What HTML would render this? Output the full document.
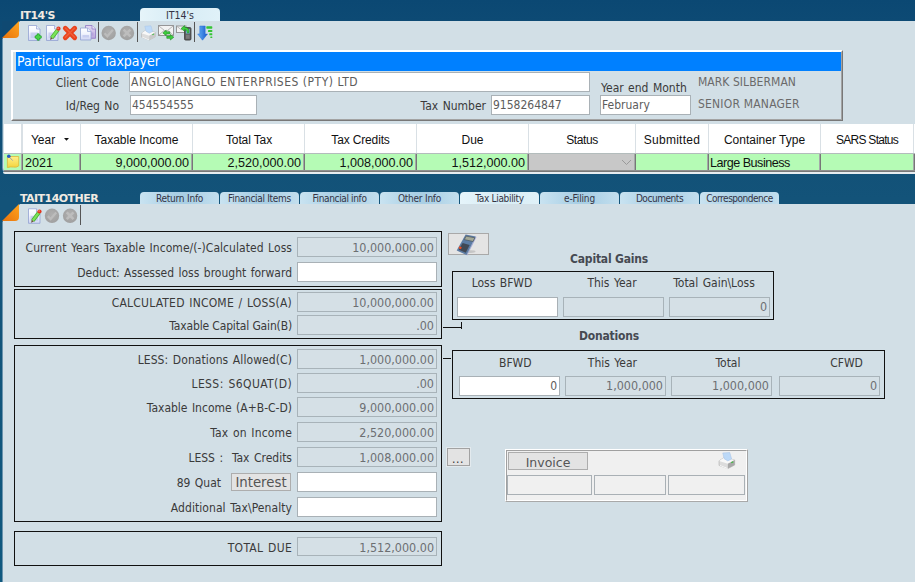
<!DOCTYPE html>
<html><head><meta charset="utf-8"><title>IT14's</title>
<style>
html,body{margin:0;padding:0;}
body{width:915px;height:582px;overflow:hidden;position:relative;background:linear-gradient(#0b4873 0px,#0d4a74 20px,#135379 200px,#10597f 582px);font-family:"DejaVu Sans Condensed","DejaVu Sans","Liberation Sans",sans-serif;font-size:12px;color:#333;}
.a{position:absolute;box-sizing:border-box;white-space:nowrap;}
.panel{background:#d2dfe6;box-shadow:-1px 0 0 #6a93ad;}
.title{color:#f1ebe2;font-weight:bold;font-size:11px;font-family:"DejaVu Sans","Liberation Sans",sans-serif;letter-spacing:-0.55px;}
.tab{height:13px;border-radius:4px 4px 0 0;background:linear-gradient(90deg,#c9e3f1,#a9cfe5 45%,#a9cfe5 60%,#c3dfee);font-size:10px;color:#334;text-align:center;line-height:14px;letter-spacing:-0.45px;}
.tab.act{background:linear-gradient(90deg,#e6f4fa,#d6ecf5 50%,#e0f1f8);}
.lbl{text-align:right;color:#3a3a3a;font-size:12px;line-height:14px;word-spacing:1px;margin-top:1px;}
.inp{background:#fff;border:1px solid #a9b1b6;color:#5c5c5c;font-size:12px;line-height:18px;padding:0 2px 0 1px;}
.ro{background:#d5e0e6;border:1px solid #a8b3b9;color:#6c6f72;font-size:12.45px;line-height:18px;text-align:right;padding:0 2px;}
.box{border:1px solid #111;}
.fl{text-align:right;color:#3a3a3a;font-size:12px;line-height:20px;height:20px;word-spacing:1px;margin-top:1px;}
.f20{line-height:20px;}
.rl{text-align:center;color:#3a3a3a;font-size:12px;line-height:14px;word-spacing:1px;}
.gh{background:#fff;font-family:"Liberation Sans",sans-serif;font-size:12px;color:#111;text-align:center;line-height:32px;top:124px;height:29px;}
.gc{background:#b5fbb5;font-family:"Liberation Sans",sans-serif;font-size:12.6px;color:#111;line-height:18px;top:154px;height:16px;padding:0 2px 0 2px;overflow:hidden;}
.r{text-align:right;}
.hd{font-weight:bold;letter-spacing:-.2px;color:#464a52;font-size:12px;text-align:center;margin-top:1px;}
.btn{background:#e3e3e3;border:1px solid #bdbdbd;color:#444;text-align:center;}
</style></head><body>

<!-- ===== top window ===== -->
<div class="a title" style="left:20px;top:9px;">IT14'S</div>
<div class="a tab act" style="left:140px;top:8px;width:80px;font-size:10.5px;letter-spacing:0;line-height:15px;">IT14's</div>
<div class="a panel" style="left:3px;top:21px;width:912px;height:153px;border-radius:0 0 0 6px;"></div>
<svg class="a" style="left:2px;top:21px;" width="18" height="18"><defs><linearGradient id="og" x1="0" y1="1" x2="1" y2="0"><stop offset="0" stop-color="#e8720c"/><stop offset="1" stop-color="#ffa51e"/></linearGradient></defs><path d="M0 0H18L0 18Z" fill="#0f4972"/><path d="M0 17 L17 0 L17 13 Q17 17 13 17 Z" fill="url(#og)"/></svg>

<!-- group frame -->
<div class="a" style="left:11px;top:50px;width:832px;height:71px;border:1px solid;border-color:#fff #787878 #787878 #fff;"></div>
<div class="a" style="left:12px;top:51px;width:830px;height:69px;border:1px solid;border-color:#fff #a3a3a3 #a3a3a3 #fff;"></div>
<div class="a" style="left:16px;top:52px;width:825px;height:19px;background:#0080ff;color:#fff;font-size:14px;line-height:19px;padding-left:1px;">Particulars of Taxpayer</div>
<div class="a lbl" style="left:30px;top:75px;width:89px;">Client Code</div>
<div class="a inp" style="left:129px;top:72px;width:461px;height:20px;letter-spacing:.5px;padding-left:1px;">ANGLO|ANGLO ENTERPRISES (PTY) LTD</div>
<div class="a lbl" style="left:30px;top:98px;width:89px;">Id/Reg No</div>
<div class="a inp" style="left:130px;top:95px;width:127px;height:20px;">454554555</div>
<div class="a lbl" style="left:400px;top:98px;width:86px;">Tax Number</div>
<div class="a inp" style="left:491px;top:95px;width:99px;height:20px;">9158264847</div>
<div class="a lbl" style="left:601px;top:80px;text-align:left;">Year end Month</div>
<div class="a inp" style="left:600px;top:95px;width:91px;height:20px;">February</div>
<div class="a" style="left:698px;top:75px;font-size:12px;color:#6a6a6a;letter-spacing:.05px;">MARK SILBERMAN</div>
<div class="a" style="left:698px;top:97px;font-size:12px;color:#6a6a6a;letter-spacing:.2px;">SENIOR MANAGER</div>

<!-- grid -->
<div class="a" style="left:4px;top:124px;width:911px;height:29px;background:#d9e0e5;"></div>
<div class="a" style="left:4px;top:153px;width:911px;height:19px;background:linear-gradient(#b3bcbc 0,#b3bcbc 1px,#777 1px);"></div>
<div class="a" style="left:3px;top:172px;width:912px;height:2px;background:#e6ecf0;border-radius:0 0 0 5px;"></div>
<div class="a gh" style="left:4px;width:17px;"></div>
<div class="a gh" style="left:23px;width:57px;padding-right:17px;">Year</div>
<div class="a gh" style="left:81px;width:111px;">Taxable Income</div>
<div class="a gh" style="left:193px;width:111px;letter-spacing:-.12px;padding-left:1px;">Total Tax</div>
<div class="a gh" style="left:305px;width:111px;letter-spacing:-.15px;">Tax Credits</div>
<div class="a gh" style="left:417px;width:111px;">Due</div>
<div class="a gh" style="left:529px;width:106px;letter-spacing:-.4px;">Status</div>
<div class="a gh" style="left:636px;width:72px;letter-spacing:.25px;">Submitted</div>
<div class="a gh" style="left:709px;width:111px;">Container Type</div>
<div class="a gh" style="left:821px;width:92px;letter-spacing:-.75px;">SARS Status</div><div class="a gh" style="left:914px;width:1px;"></div>
<div class="a gc" style="left:4px;width:17px;"></div>
<div class="a" style="left:21px;top:154px;width:1px;height:16px;background:#a4a8a8;"></div>
<div class="a gc" style="left:23px;width:56px;">2021</div>
<div class="a" style="left:79px;top:154px;width:1px;height:16px;background:#a4a8a8;"></div>
<div class="a gc r" style="left:81px;width:110px;">9,000,000.00</div>
<div class="a" style="left:191px;top:154px;width:1px;height:16px;background:#a4a8a8;"></div>
<div class="a gc r" style="left:193px;width:110px;">2,520,000.00</div>
<div class="a" style="left:303px;top:154px;width:1px;height:16px;background:#a4a8a8;"></div>
<div class="a gc r" style="left:305px;width:110px;">1,008,000.00</div>
<div class="a" style="left:415px;top:154px;width:1px;height:16px;background:#a4a8a8;"></div>
<div class="a gc r" style="left:417px;width:110px;">1,512,000.00</div>
<div class="a" style="left:527px;top:154px;width:1px;height:16px;background:#a4a8a8;"></div>
<div class="a gc" style="left:529px;width:105px;background:#c8c8c8;"></div>
<div class="a" style="left:634px;top:154px;width:1px;height:16px;background:#a4a8a8;"></div>
<div class="a gc" style="left:636px;width:71px;"></div>
<div class="a" style="left:707px;top:154px;width:1px;height:16px;background:#a4a8a8;"></div>
<div class="a gc" style="left:709px;width:110px;letter-spacing:-.5px;padding-left:1px;">Large Business</div>
<div class="a" style="left:819px;top:154px;width:1px;height:16px;background:#a4a8a8;"></div>
<div class="a gc" style="left:821px;width:92px;"></div><div class="a" style="left:913px;top:154px;width:1px;height:16px;background:#a4a8a8;"></div>
<div class="a" style="left:4px;top:170px;width:911px;height:1px;background:#909090;"></div>
<svg class="a" style="left:64px;top:138px;" width="6" height="4"><path d="M0 0h5l-2.5 2.8z" fill="#111"/></svg>
<svg class="a" style="left:621px;top:159px;" width="11" height="7"><path d="M1 1l4.5 4.5L10 1" stroke="#9a9a9a" fill="none" stroke-width="1"/></svg>
<!-- note icon -->
<svg class="a" style="left:5px;top:153px;" width="16" height="18"><defs><linearGradient id="ng" x1="0" y1="0" x2="0" y2="1"><stop offset="0" stop-color="#fff08a"/><stop offset="1" stop-color="#f3d33c"/></linearGradient></defs><path d="M2.4 3.5h11.3v9.4q-2 1.7-5.2 1.2q-3.2-.6-6.1.5z" fill="url(#ng)" stroke="#dcb73a" stroke-width=".8"/><path d="M4.5 4.2l3.2 3.4" stroke="#9aa0a8" stroke-width="1"/><circle cx="3.8" cy="3.2" r="1.8" fill="#2458c8"/></svg>

<!-- ===== bottom window ===== -->
<div class="a title" style="left:20px;top:192px;">TAIT14OTHER</div>
<div class="a tab" style="left:140px;top:192px;width:79px;letter-spacing:-0.22px;">Return Info</div>
<div class="a tab" style="left:220px;top:192px;width:79px;letter-spacing:-0.3px;">Financial Items</div>
<div class="a tab" style="left:300px;top:192px;width:79px;letter-spacing:-0.35px;">Financial info</div>
<div class="a tab" style="left:380px;top:192px;width:79px;letter-spacing:-0.22px;">Other Info</div>
<div class="a tab act" style="left:460px;top:192px;width:79px;letter-spacing:-0.32px;">Tax Liability</div>
<div class="a tab" style="left:540px;top:192px;width:79px;letter-spacing:-0.15px;">e-Filing</div>
<div class="a tab" style="left:620px;top:192px;width:79px;letter-spacing:-0.45px;">Documents</div>
<div class="a tab" style="left:700px;top:192px;width:79px;letter-spacing:-0.5px;">Correspondence</div>
<div class="a panel" style="left:3px;top:204px;width:912px;height:378px;"></div>
<svg class="a" style="left:2px;top:204px;" width="18" height="18"><path d="M0 0H18L0 18Z" fill="#135379"/><path d="M0 17 L17 0 L17 13 Q17 17 13 17 Z" fill="url(#og)"/></svg>

<!-- group 1 -->
<div class="a box" style="left:14px;top:231px;width:428px;height:56px;"></div>
<div class="a box" style="left:14px;top:289px;width:428px;height:50px;"></div>
<div class="a box" style="left:14px;top:345px;width:428px;height:177px;"></div>
<div class="a box" style="left:14px;top:531px;width:428px;height:35px;"></div>
<div class="a fl" style="left:14px;top:237px;width:278px;letter-spacing:.055px;">Current Years Taxable Income/(-)Calculated Loss</div>
<div class="a ro f20" style="left:297px;top:237px;width:140px;height:20px;">10,000,000.00</div>
<div class="a fl" style="left:14px;top:262px;width:278px;">Deduct: Assessed loss brought forward</div>
<div class="a inp f20" style="left:297px;top:262px;width:140px;height:20px;"></div>
<div class="a fl" style="left:14px;top:292px;width:278px;letter-spacing:.2px;">CALCULATED INCOME / LOSS(A)</div>
<div class="a ro f20" style="left:297px;top:292px;width:140px;height:20px;">10,000,000.00</div>
<div class="a fl" style="left:14px;top:315px;width:278px;letter-spacing:-.15px;word-spacing:0;">Taxable Capital Gain(B)</div>
<div class="a ro f20" style="left:297px;top:315px;width:140px;height:20px;">.00</div>
<div class="a fl" style="left:14px;top:349px;width:278px;letter-spacing:.09px;">LESS: Donations Allowed(C)</div>
<div class="a ro f20" style="left:297px;top:349px;width:140px;height:20px;">1,000,000.00</div>
<div class="a fl" style="left:14px;top:373px;width:278px;letter-spacing:.4px;">LESS: S6QUAT(D)</div>
<div class="a ro f20" style="left:297px;top:373px;width:140px;height:20px;">.00</div>
<div class="a fl" style="left:14px;top:397px;width:278px;">Taxable Income (A+B-C-D)</div>
<div class="a ro f20" style="left:297px;top:397px;width:140px;height:20px;">9,000,000.00</div>
<div class="a fl" style="left:14px;top:422px;width:278px;letter-spacing:.16px;">Tax on Income</div>
<div class="a ro f20" style="left:297px;top:422px;width:140px;height:20px;">2,520,000.00</div>
<div class="a fl" style="left:14px;top:447px;width:278px;">LESS :&nbsp; Tax Credits</div>
<div class="a ro f20" style="left:297px;top:447px;width:140px;height:20px;">1,008,000.00</div>
<div class="a fl" style="left:14px;top:472px;width:207px;">89 Quat</div>
<div class="a inp f20" style="left:297px;top:472px;width:140px;height:20px;"></div>
<div class="a fl" style="left:14px;top:497px;width:278px;letter-spacing:.07px;">Additional Tax\Penalty</div>
<div class="a inp f20" style="left:297px;top:497px;width:140px;height:20px;"></div>
<div class="a fl" style="left:14px;top:537px;width:278px;letter-spacing:.3px;">TOTAL DUE</div>
<div class="a ro f20" style="left:297px;top:537px;width:140px;height:19px;">1,512,000.00</div>
<div class="a btn" style="left:231px;top:473px;width:60px;height:18px;font-size:13.3px;line-height:18px;color:#555;border-color:#adadad;font-family:'DejaVu Sans',sans-serif;overflow:hidden;">Interest</div>

<!-- right side -->
<div class="a btn" style="left:448px;top:233px;width:41px;height:22px;border-color:#a9a9a9;background:#e4e4e4;"></div>
<div class="a hd" style="left:539px;top:251px;width:140px;">Capital Gains</div>
<div class="a box" style="left:452px;top:271px;width:322px;height:49px;"></div>
<div class="a rl" style="left:442px;top:276px;width:120px;">Loss BFWD</div>
<div class="a rl" style="left:552px;top:276px;width:120px;">This Year</div>
<div class="a rl" style="left:654px;top:276px;width:120px;">Total Gain\Loss</div>
<div class="a inp" style="left:457px;top:297px;width:101px;height:20px;"></div>
<div class="a ro" style="left:563px;top:297px;width:101px;height:20px;"></div>
<div class="a ro" style="left:669px;top:297px;width:101px;height:20px;">0</div>
<div class="a" style="left:443px;top:327px;width:19px;height:1px;background:#111;"></div>
<div class="a" style="left:461px;top:322px;width:1px;height:7px;background:#111;"></div>
<div class="a hd" style="left:539px;top:328px;width:140px;">Donations</div>
<div class="a" style="left:443px;top:358px;width:8px;height:1px;background:#111;"></div>
<div class="a box" style="left:452px;top:350px;width:433px;height:49px;"></div>
<div class="a rl" style="left:455.29999999999995px;top:356px;width:120px;">BFWD</div>
<div class="a rl" style="left:552.4px;top:356px;width:120px;">This Year</div>
<div class="a rl" style="left:668px;top:356px;width:120px;">Total</div>
<div class="a rl" style="left:786.5px;top:356px;width:120px;">CFWD</div>
<div class="a inp r" style="left:459px;top:376px;width:101px;height:20px;">0</div>
<div class="a ro" style="left:565px;top:376px;width:101px;height:20px;">1,000,000</div>
<div class="a ro" style="left:671px;top:376px;width:101px;height:20px;">1,000,000</div>
<div class="a ro" style="left:779px;top:376px;width:101px;height:20px;">0</div>

<div class="a btn" style="left:447px;top:448px;width:23px;height:18px;line-height:13px;border-color:#a2a2a2;box-shadow:0 0 0 1px #e3eaee;font-size:0;"><span style="font-size:12px;letter-spacing:.55px;position:absolute;left:4px;top:3.5px;color:#333;">...</span></div>
<div class="a" style="left:505px;top:449px;width:243px;height:53px;background:#f0f0f0;border:1px solid;border-color:#fff #a4a4a4 #a9a9a9 #fff;"></div><div class="a" style="left:506px;top:450px;width:241px;height:51px;border:1px solid;border-color:#a0a0a0 #fff #fff #a0a0a0;"></div>
<div class="a btn" style="left:508px;top:452px;width:80px;height:18px;font-size:12.5px;line-height:19px;color:#555;overflow:hidden;border-color:#adadad;font-family:'DejaVu Sans',sans-serif;">Invoice</div>
<div class="a" style="left:507px;top:475px;width:85px;height:20px;background:#f0f0f0;border:1px solid #a9b0b5;"></div>
<div class="a" style="left:594px;top:475px;width:72px;height:20px;background:#f0f0f0;border:1px solid #a9b0b5;"></div>
<div class="a" style="left:668px;top:475px;width:77px;height:20px;background:#f0f0f0;border:1px solid #a9b0b5;"></div>


<!-- icons -->
<svg class="a" style="left:0;top:0;" width="915" height="582" viewBox="0 0 915 582">
<defs>
<linearGradient id="pg" x1="0" y1="0" x2="0" y2="1"><stop offset="0" stop-color="#ffffff"/><stop offset=".45" stop-color="#f3f5fd"/><stop offset="1" stop-color="#cfd5f3"/></linearGradient>
<linearGradient id="pp" x1="0" y1="0" x2="0" y2="1"><stop offset="0" stop-color="#e4daf3"/><stop offset="1" stop-color="#b9a6dc"/></linearGradient>
<radialGradient id="cg" cx=".5" cy=".4" r=".6"><stop offset="0" stop-color="#b0b0b0"/><stop offset="1" stop-color="#a0a0a0"/></radialGradient>
<linearGradient id="rx" x1="0" y1="0" x2="0" y2="1"><stop offset="0" stop-color="#f4572c"/><stop offset="1" stop-color="#d93613"/></linearGradient>
<linearGradient id="ba" x1="0" y1="0" x2="1" y2="0"><stop offset="0" stop-color="#63b3f7"/><stop offset="1" stop-color="#1a57cc"/></linearGradient>
</defs>
<path d="M28.5 25.5h8.0l3.5 3.5v11.5h-11.5z" fill="url(#pg)" stroke="#93a2d2" stroke-width=".8"/><path d="M36.5 25.5v3.5h3.5" fill="#e8eefc" stroke="#93a2d2" stroke-width=".7"/><rect x="30.5" y="32.5" width="7.5" height="5.5" fill="#bfc6ec" opacity=".75"/>
<path d="M36.2 37h4M38.2 35v4" stroke="#25a52e" stroke-width="3.3" stroke-linecap="round"/><path d="M36.4 37h3.6M38.2 35.2v3.6" stroke="#4ad24a" stroke-width="2" stroke-linecap="round"/>
<path d="M46.5 25.5h8.0l3.5 3.5v11.5h-11.5z" fill="url(#pg)" stroke="#93a2d2" stroke-width=".8"/><path d="M54.5 25.5v3.5h3.5" fill="#e8eefc" stroke="#93a2d2" stroke-width=".7"/><rect x="48.5" y="32.5" width="7.5" height="5.5" fill="#bfc6ec" opacity=".75"/>
<path d="M51.8 37.8L57.8 29.8" stroke="#48ad31" stroke-width="3.9" stroke-linecap="butt"/><path d="M51.8 37.8L57.8 29.8" stroke="#7ce35a" stroke-width="2.3"/><path d="M50.1 39.9l.6-2.9 2.2 1.6z" fill="#6b5a3a"/><circle cx="58.5" cy="28.7" r="2.1" fill="#e2371f"/><circle cx="58.1" cy="28.2" r=".7" fill="#f59a84"/>
<path d="M65.3 28.3l9.4 9.4M74.7 28.3l-9.4 9.4" stroke="#e9431d" stroke-width="4.8" stroke-linecap="round"/><path d="M65.6 28.2l9 9M74.4 28.2l-9 9" stroke="#f46a45" stroke-width="1.6" stroke-linecap="round" opacity=".7"/>
<path d="M85.5 25.5h6.5l3.5 3.5v9.3h-10z" fill="url(#pp)" stroke="#9682c6" stroke-width=".9"/><path d="M92.0 25.5v3.5h3.5" fill="#efe8fa" stroke="#9682c6" stroke-width=".8"/><rect x="87.5" y="32.5" width="6" height="3.3000000000000007" fill="#b09cd8" opacity=".75"/>
<path d="M80.5 28h7.0l3.5 3.5v8.5h-10.5z" fill="url(#pg)" stroke="#93a2d2" stroke-width=".8"/><path d="M87.5 28v3.5h3.5" fill="#e8eefc" stroke="#93a2d2" stroke-width=".7"/><rect x="82.5" y="35" width="6.5" height="2.5" fill="#bfc6ec" opacity=".75"/>
<rect x="98" y="22" width="1" height="20" fill="#555"/><rect x="137" y="22" width="1" height="20" fill="#555"/><rect x="194" y="22" width="1" height="20" fill="#555"/>
<circle cx="108.7" cy="33" r="7.2" fill="url(#cg)"/><path d="M104.5 33.3l2.8 2.9 5.6-6.4" fill="none" stroke="#bcbcbc" stroke-width="2.3"/>
<circle cx="127" cy="33" r="7.2" fill="url(#cg)"/><path d="M123.6 29.6l6.8 6.8M130.4 29.6l-6.8 6.8" fill="none" stroke="#bdbdbd" stroke-width="2.6"/>
<g transform="translate(141 25.6) scale(1)"><path d="M.5 7.6L5 4.6l9.3 2.2v4.4l-6 3.2L.5 11.6z" fill="#dcdcdc" stroke="#b4b4b4" stroke-width=".6"/><path d="M.5 7.6L5 4.6l9.3 2.2-6 3.4z" fill="#f8f8f8"/><path d="M5 5.6L3.8.6l6.2-.4 1.6 5.8-3.4 1.6z" fill="#bcd9f8" stroke="#a9c4e6" stroke-width=".5"/><path d="M1.2 11.2l6.9 2.6 0 .9L1.2 12z" fill="#fff"/><path d="M8.3 10.2l6-3.4v4.4l-6 3.2z" fill="#c9c9c9"/><rect x="11.2" y="8.3" width="2" height="1" fill="#3dbb3d" transform="rotate(-28 12.2 8.8)"/></g>
<rect x="158.5" y="25.5" width="15" height="10" fill="#f3f3f3" stroke="#8e8e8e" stroke-width=".9"/><path d="M158.5 25.7l7.5 6 7.5-6M158.7 35.3l5.4-4.8M173.3 35.3l-5.4-4.8" fill="none" stroke="#a8a8a8" stroke-width=".8"/>
<path d="M162.8 32.9l3.4-2.8v1.7h3.6v2.2h-3.6v1.7z" fill="#3ecf3e" stroke="#1c8a22" stroke-width=".6"/><path d="M173.8 37.2l-3.4-2.8v1.7h-3.6v2.2h3.6v1.7z" fill="#3ecf3e" stroke="#1c8a22" stroke-width=".6"/>
<rect x="176.5" y="26" width="9.5" height="6.5" fill="#f3f3f3" stroke="#8e8e8e" stroke-width=".9"/><path d="M176.7 26.2l4.6 3.6 4.6-3.6" fill="none" stroke="#a8a8a8" stroke-width=".8"/>
<rect x="184.5" y="27.5" width="6.5" height="12.6" rx="1.2" fill="#5b5b5b" stroke="#3f3f3f" stroke-width=".8"/><rect x="185.9" y="29.2" width="3.8" height="4.3" fill="#82c4ee"/><rect x="185.9" y="34.6" width="3.8" height="4.2" fill="#7c7c7c"/>
<path d="M181 28.6l3.6-3v1.6q5 .2 4.4 5.6h-1.9q.3-3.3-2.5-3.3v1.8z" fill="#3ecf3e" stroke="#1c8a22" stroke-width=".6"/>
<path d="M199.8 26h5.4v8h2.3l-5 6.2-4.8-6.2h2.1z" fill="url(#ba)" stroke="#2a6fd8" stroke-width=".5"/>
<rect x="206.3" y="26.3" width="6" height="2.4" rx=".6" fill="#35c535"/><rect x="208" y="29.9" width="4.3" height="2.2" rx=".6" fill="#35c535"/><rect x="209.3" y="33.3" width="3" height="1.9" rx=".5" fill="#35c535"/><rect x="210.3" y="36.4" width="2" height="1.7" rx=".5" fill="#35c535"/>
<path d="M28.5 208.8h8.0l3.5 3.5v11.0h-11.5z" fill="url(#pg)" stroke="#93a2d2" stroke-width=".8"/><path d="M36.5 208.8v3.5h3.5" fill="#e8eefc" stroke="#93a2d2" stroke-width=".7"/><rect x="30.5" y="215.8" width="7.5" height="5.0" fill="#bfc6ec" opacity=".75"/>
<path d="M32.8 220.60000000000002L38.8 212.60000000000002" stroke="#48ad31" stroke-width="3.9" stroke-linecap="butt"/><path d="M32.8 220.60000000000002L38.8 212.60000000000002" stroke="#7ce35a" stroke-width="2.3"/><path d="M31.1 222.70000000000002l.6-2.9 2.2 1.6z" fill="#6b5a3a"/><circle cx="39.5" cy="211.5" r="2.1" fill="#e2371f"/><circle cx="39.1" cy="211.0" r=".7" fill="#f59a84"/>
<circle cx="52" cy="215.8" r="7.2" fill="url(#cg)"/><path d="M47.8 216.10000000000002l2.8 2.9 5.6-6.4" fill="none" stroke="#bcbcbc" stroke-width="2.3"/>
<circle cx="70.1" cy="215.8" r="7.2" fill="url(#cg)"/><path d="M66.69999999999999 212.4l6.8 6.8M73.5 212.4l-6.8 6.8" fill="none" stroke="#bdbdbd" stroke-width="2.6"/>
<rect x="80" y="205" width="1" height="20" fill="#555"/>
<ellipse cx="470.5" cy="251.6" rx="5" ry="1.4" fill="#b8b8b8" opacity=".7"/><path d="M475.7 236.5l.8.6-9.3 18.5-.7-.5z" fill="#a3a8d6"/><path d="M465.6 234.6l10.1 1.9-9.2 18.6-9.8-4.5z" fill="#5c7ca4"/><path d="M466.1 236.1l8.7 1.7-1.7 3.7-8.8-1.9z" fill="#a4a997" stroke="#4c5660" stroke-width=".7"/><path d="M462.6 243l7 2-3.8 7.7-7-3z" fill="#3d424c" opacity=".9"/><path d="M459.4 246.2l2.4 1-.9 2.1-2.4-1z" fill="#ee4a1e"/>
<g transform="translate(718.5 452.3) scale(1.13)"><path d="M.5 7.6L5 4.6l9.3 2.2v4.4l-6 3.2L.5 11.6z" fill="#dcdcdc" stroke="#b4b4b4" stroke-width=".6"/><path d="M.5 7.6L5 4.6l9.3 2.2-6 3.4z" fill="#f8f8f8"/><path d="M5 5.6L3.8.6l6.2-.4 1.6 5.8-3.4 1.6z" fill="#bcd9f8" stroke="#a9c4e6" stroke-width=".5"/><path d="M1.2 11.2l6.9 2.6 0 .9L1.2 12z" fill="#fff"/><path d="M8.3 10.2l6-3.4v4.4l-6 3.2z" fill="#a8a8a8"/><rect x="11.2" y="8.3" width="2" height="1" fill="#3dbb3d" transform="rotate(-28 12.2 8.8)"/></g>
</svg>
</body></html>
